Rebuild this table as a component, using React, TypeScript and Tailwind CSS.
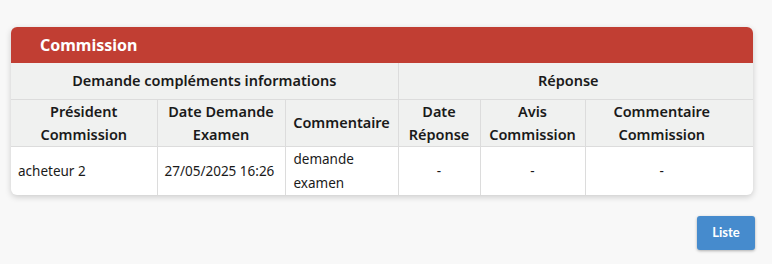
import React from 'react';

const font = { fontFamily: '"Noto Sans", "Open Sans", sans-serif' };

export default function App() {
    return (
        <div className="min-h-screen bg-[#f8f8f8] pt-[27px] pl-[11px] pr-[19px]" style={font}>
            <div className="rounded-md bg-white shadow-[0_2px_6px_rgba(0,0,0,0.18)] overflow-hidden">
                <div className="bg-[#c13e33] h-9 flex items-center pl-[29px]">
                    <h2 className="text-white font-bold text-[16px]">Commission</h2>
                </div>
                <table className="w-full border-collapse table-fixed text-[14.5px] text-[#1a1a1a]">
                    <colgroup>
                        <col className="w-[146px]" />
                        <col className="w-[128px]" />
                        <col className="w-[113px]" />
                        <col className="w-[82px]" />
                        <col className="w-[105px]" />
                        <col />
                        <col className="w-[15px]" />
                    </colgroup>
                    <thead className="bg-[#f0f1f0]">
                        <tr className="h-9">
                            <th colSpan={3} className="border-r border-b border-[#dcdcdc] font-semibold">Demande compléments informations</th>
                            <th colSpan={3} className="border-b border-[#dcdcdc] font-semibold">Réponse</th>
                            <th className="border-b border-[#dcdcdc]"></th>
                        </tr>
                        <tr className="h-[47px] leading-[23px]">
                            <th className="border-r border-b border-[#dcdcdc] font-semibold">Président<br />Commission</th>
                            <th className="border-r border-b border-[#dcdcdc] font-semibold">Date Demande<br />Examen</th>
                            <th className="border-r border-b border-[#dcdcdc] font-semibold">Commentaire</th>
                            <th className="border-r border-b border-[#dcdcdc] font-semibold">Date<br />Réponse</th>
                            <th className="border-r border-b border-[#dcdcdc] font-semibold">Avis<br />Commission</th>
                            <th className="border-b border-[#dcdcdc] font-semibold">Commentaire<br />Commission</th>
                            <th className="border-b border-[#dcdcdc]"></th>
                        </tr>
                    </thead>
                    <tbody className="text-[13.5px]">
                        <tr className="h-[47px] leading-6">
                            <td className="border-r border-[#dcdcdc] px-[7px]">acheteur 2</td>
                            <td className="border-r border-[#dcdcdc] px-[7px]">27/05/2025 16:26</td>
                            <td className="border-r border-[#dcdcdc] px-2">demande<br />examen</td>
                            <td className="border-r border-[#dcdcdc] text-center">-</td>
                            <td className="border-r border-[#dcdcdc] text-center">-</td>
                            <td className="text-center">-</td>
                            <td></td>
                        </tr>
                    </tbody>
                </table>
            </div>
            <div className="flex justify-end mt-[21px]">
                <button className="bg-[#468bcd] text-white font-bold text-[13px] w-[58px] h-[34px] rounded-[3px] shadow-[0_1px_3px_rgba(0,0,0,0.3)] mr-[-2px]" style={{ fontFamily: '"Lato", sans-serif' }}>Liste</button>
            </div>
        </div>
    );
}
